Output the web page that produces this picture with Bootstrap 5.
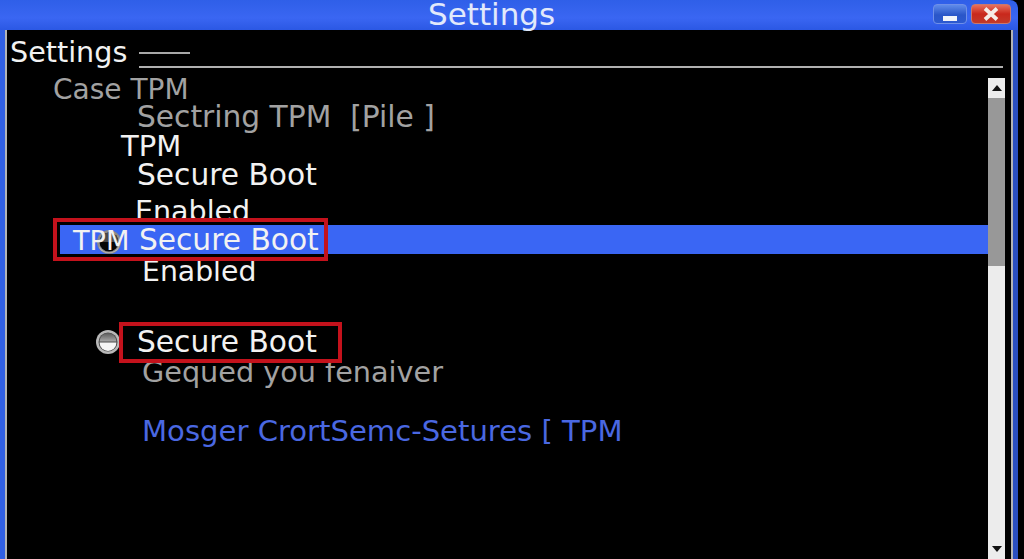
<!DOCTYPE html>
<html lang="en">
<head>
    <meta charset="UTF-8">
    <meta name="viewport" content="width=device-width, initial-scale=1.0">
    <title>Settings</title>
    <link href="https://cdn.jsdelivr.net/npm/bootstrap@5.3.0/dist/css/bootstrap.min.css" rel="stylesheet">
    <style>
        html, body { height: 100%; overflow: hidden; background: #000; }
        body { font-family: "DejaVu Sans", sans-serif; font-size: 29px; color: #f2f2f2; }
        .win-shell { height: 559px; background: #000; }

        .title-strip { height: 30px; width: 1018px; background: linear-gradient(#2f5fe8, #3a66f2 60%, #2b58e4); padding-left: 428px; padding-right: 7px; border-top-right-radius: 8px; }
        .title-text { font-size: 31px; line-height: 28px; color: #e2e9fb; }
        .win-btn { width: 34px; height: 20px; border-radius: 4px; border: 1px solid #6f8fe8; }
        .win-min { background: linear-gradient(#5f8bea, #2a56c8 55%, #2c5ad0); padding-bottom: 2px; }
        .win-close { width: 40px; background: linear-gradient(#e8705c, #c9281c 50%, #c23a2a); border-color: #c9786e; }

        .frame-body { height: 529px; }
        .edge-left { width: 7px; background: #3160e4; border-right: 2px solid #b4b4b4; }
        .edge-right { width: 13px; background: linear-gradient(90deg, #2b4fc0 5px, #000 5px); border-left: 2px solid #b4b4b4; margin-left: 6px; }

        .head-area { height: 48px; }
        .head-title { width: 132px; padding-left: 3px; line-height: 44px; font-size: 28.6px; }
        .rule-short { width: 51px; height: 2px; background: #a8a8a8; margin-top: 22px; }
        .rule-long { height: 2px; background: #b0b0b0; margin-left: 132px; margin-right: 2px; margin-top: -8px; }

        .line { white-space: nowrap; }
        .dim { color: #a2a2a2; }
        .link-blue { color: #4a68e2; }
        .row-case { height: 22px; line-height: 24px; padding-left: 46px; font-size: 28px; }
        .row-sect { height: 32px; line-height: 34px; padding-left: 130px; font-size: 29.7px; }
        .row-tpm { height: 26px; line-height: 28px; padding-left: 114px; }
        .row-sb { height: 32px; line-height: 34px; padding-left: 130px; font-size: 29.7px; }
        .row-en { height: 35px; line-height: 43px; padding-left: 128px; font-size: 28.5px; }
        .row-en2 { height: 34px; line-height: 36px; padding-left: 135px; margin-bottom: 34px; font-size: 28.3px; }
        .row-radio { height: 40px; line-height: 42px; padding-left: 89px; gap: 17px; font-size: 29.7px; }
        .row-geq { height: 20px; line-height: 20px; padding-left: 135px; margin-bottom: 34px; font-size: 28.7px; }
        .row-mos { height: 30px; line-height: 30px; padding-left: 135px; font-size: 29.1px; }

        .hi-row { height: 29px; background: #3a66f4; margin-left: 53px; padding-left: 13px; line-height: 29px; font-size: 29.7px; }
        .hi-text { position: relative; }
        .hi-tpm { font-size: 27.2px; }
        .red-mark { position: absolute; border: 4px solid #c4121c; }
        .mark-one { left: 46px; top: -7px; width: 275px; height: 43px; }
        .mark-two { left: 112px; top: 0; width: 223px; height: 41px; }
        .radio-over { position: absolute; left: 89px; top: 4px; }

        .scroll-track { width: 17px; background: #ececec; }
        .scroll-thumb { height: 168px; background: #989898; }
        .scroll-cap { height: 20px; }
    </style>
</head>
<body>
<div class="win-shell">
    <div class="title-strip d-flex align-items-start">
        <div class="title-text">Settings</div>
        <div class="ms-auto d-flex gap-1 pt-1">
            <div class="win-btn win-min d-flex align-items-end justify-content-center">
                <svg width="14" height="5"><rect width="14" height="5" fill="#f2f4fa"/></svg>
            </div>
            <div class="win-btn win-close d-flex align-items-center justify-content-center">
                <svg width="18" height="14" viewBox="0 0 18 14"><path d="M3 1.5l12 11M15 1.5L3 12.5" stroke="#f6ece6" stroke-width="3.8" fill="none"/></svg>
            </div>
        </div>
    </div>
    <div class="frame-body d-flex">
        <div class="edge-left"></div>
        <div class="flex-grow-1 d-flex flex-column">
            <div class="head-area">
                <div class="d-flex">
                    <div class="head-title">Settings</div>
                    <div class="rule-short"></div>
                </div>
                <div class="rule-long"></div>
            </div>
            <div class="d-flex flex-grow-1">
                <div class="flex-grow-1">
                    <div class="line dim row-case">Case TPM</div>
                    <div class="line dim row-sect">Sectring TPM&nbsp; [Pile ]</div>
                    <div class="line row-tpm">TPM</div>
                    <div class="line row-sb">Secure Boot</div>
                    <div class="line row-en">Enabled</div>
                    <div class="position-relative">
                        <div class="hi-row line">
                            <svg class="radio-over" width="26" height="26" viewBox="0 0 26 26">
                                <circle cx="13" cy="13" r="12" fill="#8a8a8a"/>
                                <circle cx="13" cy="13" r="9.5" fill="#050505"/>
                                <path d="M3.5 13a9.5 9.5 0 0 1 19 0z" fill="#4a4a4a"/>
                                <path d="M3 17a11 11 0 0 0 20 0a10 7 0 0 1-20 0z" fill="#c8c8c8"/>
                            </svg>
                            <span class="hi-text"><span class="hi-tpm">TPM</span> Secure Boot</span>
                        </div>
                        <div class="red-mark mark-one"></div>
                    </div>
                    <div class="line row-en2">Enabled</div>
                    <div class="position-relative d-flex align-items-center line row-radio">
                        <svg width="24" height="24" viewBox="0 0 24 24">
                            <defs>
                                <linearGradient id="radio-top" x1="0" y1="0" x2="0" y2="1">
                                    <stop offset="0" stop-color="#5c5c5c"/>
                                    <stop offset="1" stop-color="#a8a8a8"/>
                                </linearGradient>
                            </defs>
                            <circle cx="12" cy="12" r="12" fill="#b8b8b8"/>
                            <circle cx="12" cy="12" r="9.5" fill="#4a4a4a"/>
                            <path d="M3.6 12.5a8.4 8.4 0 0 0 16.8 0z" fill="#f6f6f6"/>
                            <path d="M3.6 11.5a8.4 8.4 0 0 1 16.8 0z" fill="url(#radio-top)"/>
                        </svg>
                        <span>Secure Boot</span>
                        <div class="red-mark mark-two"></div>
                    </div>
                    <div class="line dim row-geq">Gequed you fenaiver</div>
                    <div class="line link-blue row-mos">Mosger CrortSemc-Setures [ TPM</div>
                </div>
                <div class="scroll-track d-flex flex-column">
                    <div class="scroll-cap d-flex align-items-center justify-content-center">
                        <svg width="12" height="8"><path d="M6 1l5 6H1z" fill="#111"/></svg>
                    </div>
                    <div class="scroll-thumb"></div>
                    <div class="mt-auto scroll-cap d-flex align-items-center justify-content-center">
                        <svg width="12" height="8"><path d="M1 1h10L6 7z" fill="#111"/></svg>
                    </div>
                </div>
            </div>
        </div>
        <div class="edge-right"></div>
    </div>
</div>
</body>
</html>
